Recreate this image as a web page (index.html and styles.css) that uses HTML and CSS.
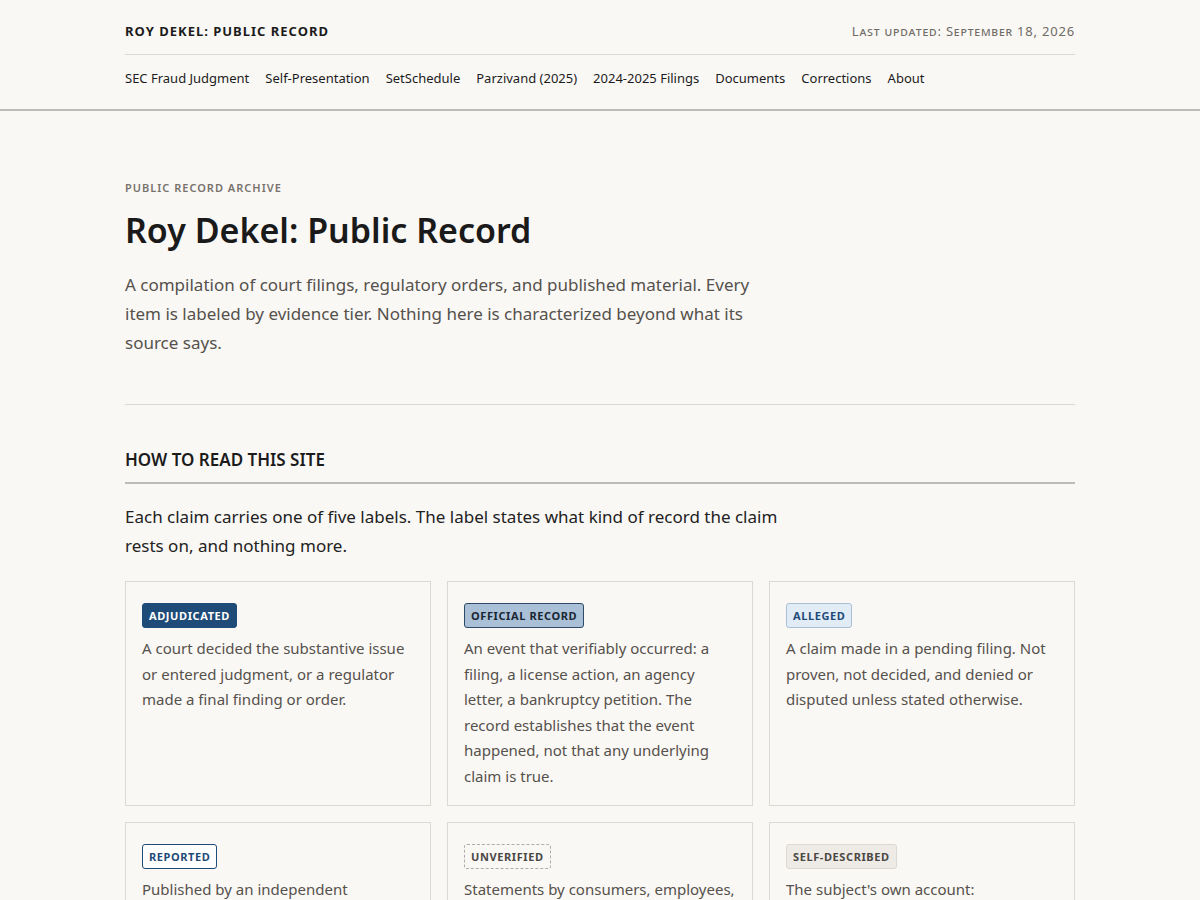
FILE: index.html
```html
<!DOCTYPE html>
<html lang="en">
  <head>
    <meta charset="UTF-8" />
    <meta name="viewport" content="width=device-width, initial-scale=1.0" />
    <title>Roy Dekel: Public Record</title>
    <link rel="stylesheet" href="styles.css">
  </head>

  <body>
    <header class="site-header">
      <div class="wrap">
        <div class="masthead">
          <a class="site-title" href="#">Roy Dekel: Public Record</a>
          <span class="updated">Last updated: September 18, 2026</span>
        </div>
        <nav class="site-nav">
          <a href="#">SEC Fraud Judgment</a>
          <a href="#">Self-Presentation</a>
          <a href="#">SetSchedule</a>
          <a href="#">Parzivand (2025)</a>
          <a href="#">2024-2025 Filings</a>
          <a href="#">Documents</a>
          <a href="#">Corrections</a>
          <a href="#">About</a>
        </nav>
      </div>
    </header>

    <main class="wrap">
      <section class="intro">
        <p class="eyebrow">Public Record Archive</p>
        <h1>Roy Dekel: Public Record</h1>
        <p class="lead">
          A compilation of court filings, regulatory orders, and published
          material. Every item is labeled by evidence tier. Nothing here is
          characterized beyond what its source says.
        </p>
      </section>

      <section class="legend">
        <h2>How to read this site</h2>
        <p class="legend-note">
          Each claim carries one of five labels. The label states what kind of
          record the claim rests on, and nothing more.
        </p>

        <div class="tiers">
          <div class="tier">
            <span class="tag tag-adjudicated">Adjudicated</span>
            <p>A court decided the substantive issue or entered judgment, or a regulator made a final finding or order.</p>
          </div>
          <div class="tier">
            <span class="tag tag-official">Official Record</span>
            <p>An event that verifiably occurred: a filing, a license action, an agency letter, a bankruptcy petition. The record establishes that the event happened, not that any underlying claim is true.</p>
          </div>
          <div class="tier">
            <span class="tag tag-alleged">Alleged</span>
            <p>A claim made in a pending filing. Not proven, not decided, and denied or disputed unless stated otherwise.</p>
          </div>
          <div class="tier">
            <span class="tag tag-reported">Reported</span>
            <p>Published by an independent publication or outlet, attributed to that source, and not independently confirmed here.</p>
          </div>
          <div class="tier">
            <span class="tag tag-unverified">Unverified</span>
            <p>Statements by consumers, employees, or other individuals in reviews or complaints. Recorded as statements, not as facts.</p>
          </div>
          <div class="tier">
            <span class="tag tag-self">Self-Described</span>
            <p>The subject's own account: biographies, interviews, press releases, and marketing. Shown as what he says, not as what is.</p>
          </div>
        </div>
      </section>
    </main>
  </body>
</html>
```

FILE: styles.css
```css
body {
  margin: 0;
  background: #faf8f5;
  color: #1c1c1c;
  font-family: "Noto Sans", "Open Sans", sans-serif;
}

a {
  color: inherit;
  text-decoration: none;
}

.wrap {
  width: 950px;
  margin: 0 auto;
}

/* header */

.site-header {
  border-bottom: 2px solid #bdbbb8;
}

.masthead {
  display: flex;
  justify-content: space-between;
  align-items: center;
  padding: 22px 0 14px;
  border-bottom: 1px solid #dcd9d5;
}

.site-title {
  font-size: 13px;
  font-weight: 700;
  letter-spacing: 1px;
  text-transform: uppercase;
  line-height: 18px;
  color: #1c1c1c;
}

.updated {
  font-size: 13px;
  font-variant: small-caps;
  letter-spacing: 0.8px;
  color: #6f6b66;
  line-height: 18px;
}

.site-nav {
  display: flex;
  gap: 16px;
  padding: 14px 0 22px;
  font-size: 13px;
  line-height: 18px;
}

.site-nav a {
  color: #1c1c1c;
}

/* intro */

.intro {
  padding: 69px 0 47px;
  border-bottom: 1px solid #dcd9d5;
}

.eyebrow {
  margin: 0;
  font-size: 11px;
  font-weight: 600;
  letter-spacing: 1px;
  text-transform: uppercase;
  color: #77726c;
  line-height: 16px;
}

h1 {
  margin: 12px 0 18px;
  font-size: 34px;
  font-weight: 600;
  line-height: 44px;
  color: #1a1a1a;
}

.lead {
  margin: 0;
  max-width: 640px;
  font-size: 17px;
  line-height: 29px;
  color: #55514c;
}

/* legend */

.legend {
  padding-top: 42px;
}

h2 {
  margin: 0;
  padding-bottom: 9px;
  border-bottom: 2px solid #bdbbb8;
  font-size: 17px;
  font-weight: 600;
  text-transform: uppercase;
  line-height: 26px;
  color: #1c1c1c;
}

.legend-note {
  margin: 18px 0 21px;
  max-width: 660px;
  font-size: 17px;
  line-height: 29px;
  color: #222;
}

.tiers {
  display: grid;
  grid-template-columns: repeat(3, 1fr);
  gap: 16px;
}

.tier {
  border: 1px solid #dcd9d5;
  padding: 21px 16px 16px;
  min-height: 185px;
}

.tier p {
  margin: 8px 0 0;
  font-size: 15px;
  line-height: 25.5px;
  color: #55514c;
}

.tag {
  display: inline-block;
  padding: 3px 6px;
  border: 1px solid transparent;
  border-radius: 3px;
  font-size: 11px;
  font-weight: 700;
  letter-spacing: 0.6px;
  text-transform: uppercase;
  line-height: 17px;
}

.tag-adjudicated {
  background: #1f4b78;
  border-color: #1f4b78;
  color: #fff;
}

.tag-official {
  background: #a9c0d7;
  border-color: #2e4a68;
  color: #1a2633;
}

.tag-alleged {
  background: #e2ecf7;
  border-color: #a8bfd6;
  color: #1f4b78;
}

.tag-reported {
  background: #fff;
  border-color: #1f4b78;
  color: #1f4b78;
}

.tag-unverified {
  border: 1px dashed #b0aca7;
  color: #4a4744;
}

.tag-self {
  background: #eeebe6;
  border-color: #dcd9d5;
  color: #4a4744;
}
```
